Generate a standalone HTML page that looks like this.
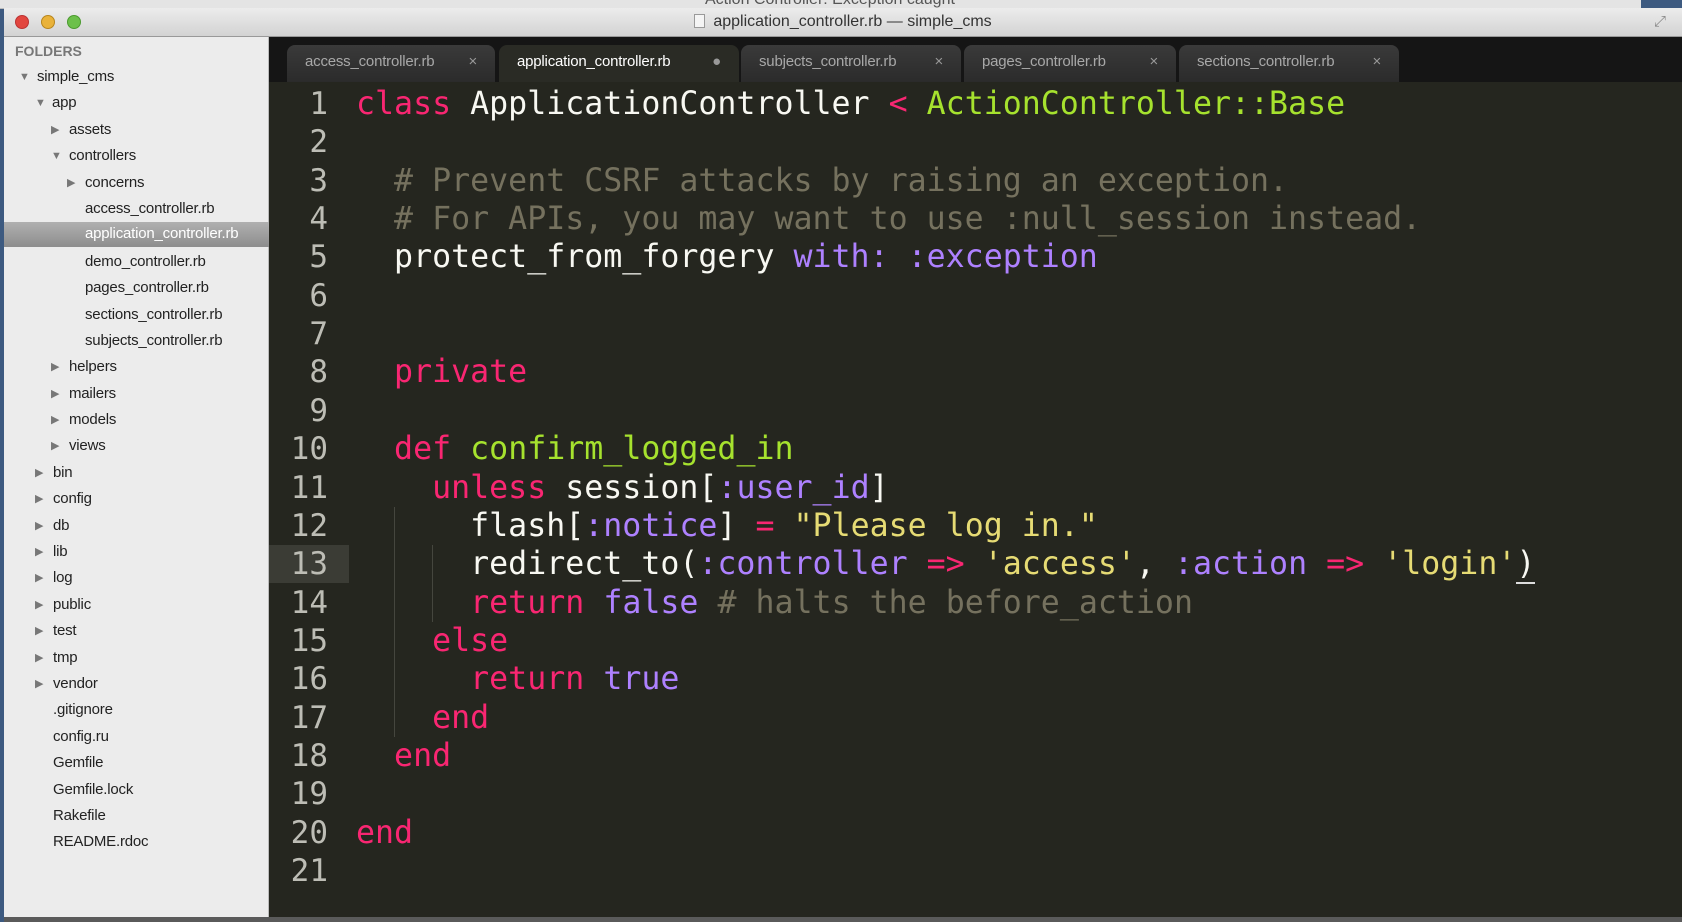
<!DOCTYPE html>
<html><head><meta charset="utf-8"><style>
*{margin:0;padding:0;box-sizing:border-box}
body{width:1682px;height:922px;overflow:hidden;background:#3d5a80;position:relative;font-family:"Liberation Sans",sans-serif}
#back{position:absolute;left:0;top:0;width:1641px;height:9px;background:#e4e4e4;border-bottom:1px solid #bbb;overflow:hidden}
#back span{position:absolute;left:705px;top:-9px;font-size:16px;color:#555}
#win{position:absolute;left:4px;top:8px;width:1678px;height:914px;background:#25261f}
#title{position:absolute;left:0;top:0;width:100%;height:29px;background:linear-gradient(#ececec,#d3d3d3);border-bottom:1px solid #999;text-align:center;font-size:16px;color:#333;line-height:28px}
.dot{position:absolute;top:7px;width:14px;height:14px;border-radius:50%}
#side{position:absolute;left:0;top:29px;width:265px;height:880px;background:#ececec;border-right:1px solid #bbb}
#list{position:absolute;left:0;top:2px;width:265px;height:870px}
.it{position:absolute;font-size:15px;color:#222;letter-spacing:-0.2px;white-space:nowrap;line-height:26px;height:26px}
.ar{position:absolute;font-size:11px;color:#777;line-height:26px}
#sel{position:absolute;left:0;top:185px;width:265px;height:25px;background:linear-gradient(#b0b0b0,#8d8d8d)}
#tabs{position:absolute;left:265px;top:29px;width:1413px;height:45px;background:#151515}
.tab{position:absolute;top:8px;height:37px;background:linear-gradient(#3a3a3a,#2b2b2b);border-radius:8px 8px 0 0;color:#a8a8a8;font-size:15px;line-height:34px;padding-left:18px;white-space:nowrap;letter-spacing:-0.2px}
.tab.a{background:#2a2b25;color:#fff}
.tab b{position:absolute;right:18px;font-weight:normal;color:#999}
#code{position:absolute;left:265px;top:77px;width:1413px;height:832px}
.ln{position:absolute;left:0;width:59px;text-align:right;font-family:"DejaVu Sans Mono",monospace;font-size:31px;color:#bdbdb5;height:38.35px;line-height:38.35px}
.cl{position:absolute;left:87px;font-family:"DejaVu Sans Mono",monospace;font-size:31.6px;color:#f8f8f2;white-space:pre;height:38.35px;line-height:38.35px}
.k{color:#f92672}.g{color:#a6e22e}.p{color:#ae81ff}.s{color:#e6db74}.c{color:#75715e}
.guide{position:absolute;width:1px;background:#45463e}
#status{position:absolute;left:0;top:909px;width:1678px;height:5px;background:#5a5a5a}
</style></head><body>
<div id="back"><span>Action Controller: Exception caught</span></div>
<div id="win">
<div id="title">
<div class="dot" style="left:11px;background:#e2463f;border:1px solid #b33"></div>
<div class="dot" style="left:37px;background:#e9b23a;border:1px solid #b8861d"></div>
<div class="dot" style="left:63px;background:#6cc04a;border:1px solid #4b9a2f"></div>
<span style="display:inline-block;width:11px;height:14px;border:1px solid #999;background:#f4f4f4;vertical-align:-2px;margin-right:8px"></span>application_controller.rb — simple_cms
<span style="position:absolute;right:16px;top:0;color:#888;font-size:15px">⤢</span>
</div>
<div id="side">
<div id="sel"></div>
<div id="list">
<div class="it" style="left:11px;top:-1px;font-size:14px;color:#777;font-weight:bold;letter-spacing:0">FOLDERS</div>
<div class="ar" style="left:15px;top:25px">▼</div><div class="it" style="left:33px;top:25px">simple_cms</div>
<div class="ar" style="left:31px;top:51px">▼</div><div class="it" style="left:48px;top:51px">app</div>
<div class="ar" style="left:47px;top:78px">▶</div><div class="it" style="left:65px;top:78px">assets</div>
<div class="ar" style="left:47px;top:104px">▼</div><div class="it" style="left:65px;top:104px">controllers</div>
<div class="ar" style="left:63px;top:131px">▶</div><div class="it" style="left:81px;top:131px">concerns</div>
<div class="it" style="left:81px;top:157px">access_controller.rb</div>
<div class="it" style="left:81px;top:182px;color:#fff">application_controller.rb</div>
<div class="it" style="left:81px;top:210px">demo_controller.rb</div>
<div class="it" style="left:81px;top:236px">pages_controller.rb</div>
<div class="it" style="left:81px;top:263px">sections_controller.rb</div>
<div class="it" style="left:81px;top:289px">subjects_controller.rb</div>
<div class="ar" style="left:47px;top:315px">▶</div><div class="it" style="left:65px;top:315px">helpers</div>
<div class="ar" style="left:47px;top:342px">▶</div><div class="it" style="left:65px;top:342px">mailers</div>
<div class="ar" style="left:47px;top:368px">▶</div><div class="it" style="left:65px;top:368px">models</div>
<div class="ar" style="left:47px;top:394px">▶</div><div class="it" style="left:65px;top:394px">views</div>
<div class="ar" style="left:31px;top:421px">▶</div><div class="it" style="left:49px;top:421px">bin</div>
<div class="ar" style="left:31px;top:447px">▶</div><div class="it" style="left:49px;top:447px">config</div>
<div class="ar" style="left:31px;top:474px">▶</div><div class="it" style="left:49px;top:474px">db</div>
<div class="ar" style="left:31px;top:500px">▶</div><div class="it" style="left:49px;top:500px">lib</div>
<div class="ar" style="left:31px;top:526px">▶</div><div class="it" style="left:49px;top:526px">log</div>
<div class="ar" style="left:31px;top:553px">▶</div><div class="it" style="left:49px;top:553px">public</div>
<div class="ar" style="left:31px;top:579px">▶</div><div class="it" style="left:49px;top:579px">test</div>
<div class="ar" style="left:31px;top:606px">▶</div><div class="it" style="left:49px;top:606px">tmp</div>
<div class="ar" style="left:31px;top:632px">▶</div><div class="it" style="left:49px;top:632px">vendor</div>
<div class="it" style="left:49px;top:658px">.gitignore</div>
<div class="it" style="left:49px;top:685px">config.ru</div>
<div class="it" style="left:49px;top:711px">Gemfile</div>
<div class="it" style="left:49px;top:738px">Gemfile.lock</div>
<div class="it" style="left:49px;top:764px">Rakefile</div>
<div class="it" style="left:49px;top:790px">README.rdoc</div>
</div>
</div>
<div id="tabs">
<div class="tab" style="left:18px;width:208px">access_controller.rb<b>×</b></div>
<div class="tab a" style="left:230px;width:240px">application_controller.rb<b>●</b></div>
<div class="tab" style="left:472px;width:220px">subjects_controller.rb<b>×</b></div>
<div class="tab" style="left:695px;width:212px">pages_controller.rb<b>×</b></div>
<div class="tab" style="left:910px;width:220px">sections_controller.rb<b>×</b></div>
</div>
<div id="code">
<div style="position:absolute;left:0;top:460px;width:80px;height:38px;background:#3b3c35"></div>
<div class="guide" style="left:125px;top:422px;height:230px"></div>
<div class="guide" style="left:163px;top:460px;height:77px"></div>
<div class="ln" style="top:0px">1</div><div class="cl" style="top:0px"><span class="k">class</span> ApplicationController <span class="k">&lt;</span> <span class="g">ActionController::Base</span></div>
<div class="ln" style="top:38.35px">2</div>
<div class="ln" style="top:76.7px">3</div><div class="cl c" style="top:76.7px">  # Prevent CSRF attacks by raising an exception.</div>
<div class="ln" style="top:115.05px">4</div><div class="cl c" style="top:115.05px">  # For APIs, you may want to use :null_session instead.</div>
<div class="ln" style="top:153.4px">5</div><div class="cl" style="top:153.4px">  protect_from_forgery <span class="p">with: :exception</span></div>
<div class="ln" style="top:191.75px">6</div>
<div class="ln" style="top:230.1px">7</div>
<div class="ln" style="top:268.45px">8</div><div class="cl" style="top:268.45px">  <span class="k">private</span></div>
<div class="ln" style="top:306.8px">9</div>
<div class="ln" style="top:345.15px">10</div><div class="cl" style="top:345.15px">  <span class="k">def</span> <span class="g">confirm_logged_in</span></div>
<div class="ln" style="top:383.5px">11</div><div class="cl" style="top:383.5px">    <span class="k">unless</span> session[<span class="p">:user_id</span>]</div>
<div class="ln" style="top:421.85px">12</div><div class="cl" style="top:421.85px">      flash[<span class="p">:notice</span>] <span class="k">=</span> <span class="s">"Please log in."</span></div>
<div class="ln" style="top:460.2px">13</div><div class="cl" style="top:460.2px">      redirect_to(<span class="p">:controller</span> <span class="k">=&gt;</span> <span class="s">'access'</span>, <span class="p">:action</span> <span class="k">=&gt;</span> <span class="s">'login'</span><span style="border-bottom:2px solid #ddd">)</span></div>
<div class="ln" style="top:498.55px">14</div><div class="cl" style="top:498.55px">      <span class="k">return</span> <span class="p">false</span> <span class="c"># halts the before_action</span></div>
<div class="ln" style="top:536.9px">15</div><div class="cl" style="top:536.9px">    <span class="k">else</span></div>
<div class="ln" style="top:575.25px">16</div><div class="cl" style="top:575.25px">      <span class="k">return</span> <span class="p">true</span></div>
<div class="ln" style="top:613.6px">17</div><div class="cl" style="top:613.6px">    <span class="k">end</span></div>
<div class="ln" style="top:651.95px">18</div><div class="cl" style="top:651.95px">  <span class="k">end</span></div>
<div class="ln" style="top:690.3px">19</div>
<div class="ln" style="top:728.65px">20</div><div class="cl" style="top:728.65px"><span class="k">end</span></div>
<div class="ln" style="top:767px">21</div>
</div>
<div id="status"></div>
</div>
</body></html>
